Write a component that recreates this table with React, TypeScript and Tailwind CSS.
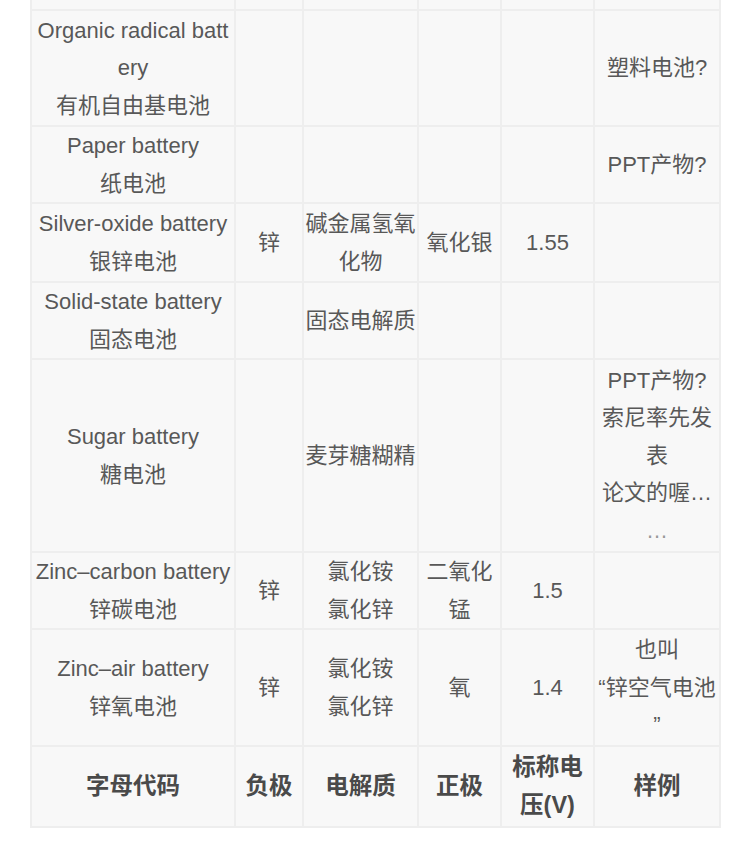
const font = { fontFamily: '"Liberation Sans", "Noto Sans CJK SC", sans-serif' }

type Row = { h: number; cells: React.ReactNode[] }

const rows: Row[] = [
  { h: 116, cells: [<>Organic radical batt<br />ery<br />有机自由基电池</>, '', '', '', '', '塑料电池?'] },
  { h: 77, cells: [<>Paper battery<br />纸电池</>, '', '', '', '', 'PPT产物?'] },
  { h: 79, cells: [<>Silver-oxide battery<br />银锌电池</>, '锌', <>碱金属氢氧<br />化物</>, '氧化银', '1.55', ''] },
  { h: 77, cells: [<>Solid-state battery<br />固态电池</>, '', '固态电解质', '', '', ''] },
  {
    h: 193,
    cells: [<>Sugar battery<br />糖电池</>, '', '麦芽糖糊精', '', '', <>PPT产物?<br />索尼率先发<br />表<br />论文的喔…<br /><span className="text-[#999]">…</span></>],
  },
  { h: 77, cells: [<>Zinc–carbon battery<br />锌碳电池</>, '锌', <>氯化铵<br />氯化锌</>, <>二氧化<br />锰</>, '1.5', ''] },
  { h: 117, cells: [<>Zinc–air battery<br />锌氧电池</>, '锌', <>氯化铵<br />氯化锌</>, '氧', '1.4', <>也叫<br />“锌空气电池<br />”</>] },
]

const header = ['字母代码', '负极', '电解质', '正极', <>标称电<br />压(V)</>, '样例']
const widths = [204, 68, 115, 83, 93, 126]

export default function App() {
  return (
    <div className="w-[750px] h-[861px] bg-white overflow-hidden" style={font}>
      <table className="ml-[30px] w-[689px] table-fixed border-collapse bg-[#f8f8f8] text-[22px] leading-[37.5px] text-[#585858]">
        <colgroup>
          {widths.map((w, i) => (
            <col key={i} style={{ width: w }} />
          ))}
        </colgroup>
        <tbody>
          <tr className="h-[10px]">
            {widths.map((_, i) => (
              <td key={i} className="border-2 border-t-0 border-[#eeeeee] p-0" />
            ))}
          </tr>
          {rows.map((r, ri) => (
            <tr key={ri} style={{ height: r.h }}>
              {r.cells.map((c, ci) => (
                <td key={ci} className="border-2 border-[#eeeeee] px-[1px] py-0 text-center align-middle break-all">
                  {c}
                </td>
              ))}
            </tr>
          ))}
          <tr className="h-[81px]">
            {header.map((c, ci) => (
              <td key={ci} className="border-2 border-[#eeeeee] px-[1px] py-0 text-center align-middle text-[23.5px] font-bold text-[#4a4a4a]">
                {c}
              </td>
            ))}
          </tr>
        </tbody>
      </table>
    </div>
  )
}
